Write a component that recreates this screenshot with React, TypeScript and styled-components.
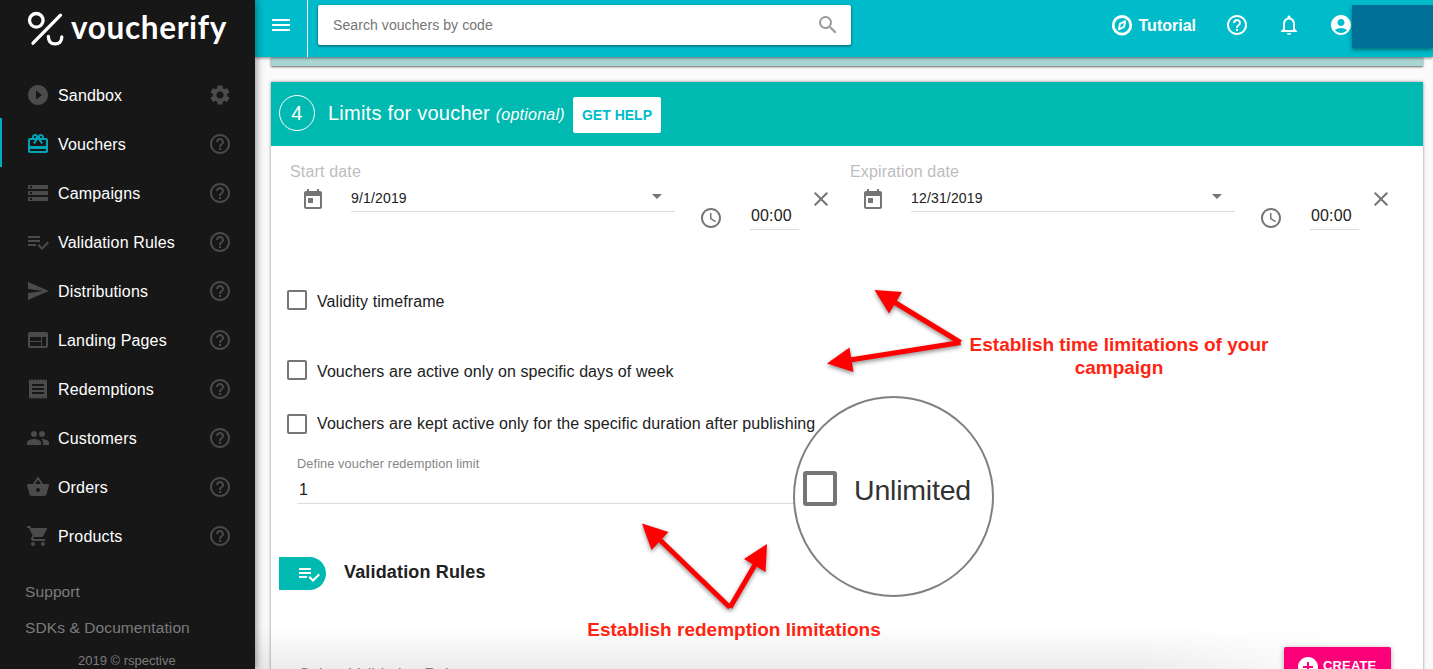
import React from "react"
import styled, {createGlobalStyle} from "styled-components"
import {IconType} from "react-icons"
import {
    MdAccessTime,
    MdAccountCircle,
    MdAddCircle,
    MdClose,
    MdHelpOutline,
    MdMenu,
    MdNotificationsNone,
    MdPeople,
    MdPlayCircleFilled,
    MdReceipt,
    MdRedeem,
    MdSearch,
    MdSend,
    MdSettings,
    MdShoppingBasket,
    MdShoppingCart,
    MdStorage,
    MdToday,
    MdWeb
} from "react-icons/md"

const GlobalStyle = createGlobalStyle`
  * {
    box-sizing: border-box;
  }

  body {
    margin: 0;
    overflow: hidden;
    background: #fafafa;
    font-family: "Liberation Sans", Arial, sans-serif;
    letter-spacing: 0.01em;
  }
`

const Page = styled.div`
  position: relative;
  display: flex;
  width: 1433px;
  height: 669px;
  overflow: hidden;
`

/* ---------- sidebar ---------- */

const Sidebar = styled.aside`
  position: relative;
  z-index: 3;
  flex: 0 0 255px;
  display: flex;
  flex-direction: column;
  background: #171717;
  box-shadow: 1px 0 8px rgba(0, 0, 0, 0.45);
`

const Brand = styled.div`
  flex: none;
  display: flex;
  height: 69px;
  padding: 10px 0 0 26px;
`

const BrandName = styled.span`
  margin: -1px 0 0 5px;
  font-family: Lato, sans-serif;
  font-size: 31.5px;
  font-weight: 700;
  line-height: 36px;
  letter-spacing: 0.65px;
  color: #fff;
`

const NavRow = styled.a<{ $active?: boolean }>`
  flex: none;
  display: flex;
  align-items: center;
  height: 49px;
  padding: 3px 23px 0 24px;
  border-left: 2px solid ${props => props.$active ? "#00acbf" : "transparent"};
  color: #fff;
  font-size: 16px;

  svg {
    flex: none;
    color: #4b4b4b;
  }

  svg:first-child {
    color: ${props => props.$active ? "#00a5b8" : "#4b4b4b"};
  }
`

const NavLabel = styled.span`
  flex: 1;
  padding: 1px 0 0 8px;
  white-space: nowrap;
`

const SideLinks = styled.div`
  flex: none;
  display: flex;
  flex-direction: column;
  padding: 15px 0 0 25px;
  color: #7c7c7c;
  font-size: 15.5px;
  line-height: 36px;
  letter-spacing: 0.1px;
`

const Copyright = styled.div`
  flex: none;
  padding-left: 78px;
  color: #7c7c7c;
  font-size: 13px;
  line-height: 30px;
  letter-spacing: 0;
`

/* ---------- top bar ---------- */

const Main = styled.div`
  position: relative;
  flex: 1;
  display: flex;
  flex-direction: column;
  min-width: 0;
`

const TopBar = styled.header`
  position: relative;
  z-index: 2;
  flex: 0 0 57px;
  display: flex;
  background: #00bbca;
  color: #fff;
  box-shadow: 0 1px 3px rgba(0, 0, 0, 0.5);
`

const MenuButton = styled.div`
  width: 53px;
  padding: 13px 0 0 14px;
  border-right: 1px solid #fff;
`

const SearchBox = styled.div`
  display: flex;
  align-items: center;
  justify-content: space-between;
  width: 533px;
  height: 40px;
  margin: 5px 0 0 10px;
  padding: 0 11px 0 15px;
  border-radius: 2px;
  background: #fff;
  color: #757575;
  font-size: 14px;
  letter-spacing: 0.08px;
  box-shadow: 0 1px 3px rgba(0, 0, 0, 0.55);

  svg {
    color: #999;
  }
`

const TopActions = styled.div`
  flex: 1;
  display: flex;
  justify-content: flex-end;
  padding-top: 13px;

  svg {
    flex: none;
  }
`

const Tutorial = styled.div`
  display: flex;
  align-items: center;
  gap: 5px;
  height: 24px;
  margin-right: 29px;
  font-size: 16px;
  font-weight: 700;
  letter-spacing: 0;
`

const TutorialText = styled.span`
  padding-top: 2px;
`

const TopIcon = styled.div<{ $gap: number }>`
  height: 24px;
  margin-right: ${props => props.$gap}px;
`

const AccountBlock = styled.div`
  width: 81px;
  height: 43px;
  margin: -8px 0 0 -1px;
  background: #006f95;
  box-shadow: 0 2px 4px rgba(0, 0, 0, 0.4);
`

/* ---------- cards ---------- */

const PreviousCard = styled.div`
  flex: none;
  height: 9px;
  margin: 0 10px 16px 16px;
  background: #a9d5d2;
  box-shadow: 0 1px 2px rgba(0, 0, 0, 0.6);
`

const Card = styled.section`
  flex: none;
  display: flex;
  flex-direction: column;
  margin: 0 10px 0 16px;
  background: #fff;
  box-shadow: 0 0 3px rgba(0, 0, 0, 0.45);
`

const CardHeader = styled.div`
  display: flex;
  height: 64px;
  padding: 13px 8px;
  background: #00b9b0;
  color: #fff;
`

const StepNumber = styled.div`
  display: flex;
  align-items: center;
  justify-content: center;
  width: 36px;
  height: 36px;
  border: 1px solid #fff;
  border-radius: 50%;
  font-size: 20px;
`

const CardTitle = styled.h2`
  width: 237px;
  margin: 0 8px 0 13px;
  font-size: 20px;
  font-weight: 400;
  line-height: 37px;
  letter-spacing: 0.23px;
  white-space: nowrap;

  em {
    font-size: 16px;
  }
`

const HelpButton = styled.button`
  width: 88px;
  height: 36px;
  margin-top: 2px;
  padding: 0;
  border: 0;
  border-radius: 2px;
  background: #fff;
  color: #00bbca;
  font: 700 14px "Liberation Sans", Arial, sans-serif;
  letter-spacing: 0;
`

const Dates = styled.div`
  display: grid;
  grid-template-columns: 560px 560px;
  height: 141px;
  padding: 15px 0 0 19px;
`

const DateLabel = styled.div`
  height: 22px;
  color: #bdbdbd;
  font-size: 16px;
  line-height: 22px;
`

const DateRow = styled.div`
  display: flex;
  align-items: flex-start;
  padding-left: 11px;
  color: #757575;

  svg {
    flex: none;
  }
`

const CalendarIcon = styled(MdToday)`
  margin-top: 5px;
`

const DateInput = styled.div`
  display: flex;
  justify-content: space-between;
  width: 324px;
  height: 29px;
  margin: 0 24px 0 26px;
  padding: 6px 13px 0 0;
  border-bottom: 1px solid #dcdcdc;
  color: #212121;
  font-size: 14px;
  line-height: 18px;
`

const Caret = styled.span`
  width: 0;
  height: 0;
  margin-top: 5px;
  border: 5px solid transparent;
  border-top-color: #757575;
  border-bottom: 0;
`

const ClockIcon = styled(MdAccessTime)`
  margin-top: 23px;
`

const TimeInput = styled.div`
  width: 49px;
  height: 25px;
  margin: 22px 10px 0 27px;
  padding-left: 1px;
  border-bottom: 1px solid #dcdcdc;
  color: #212121;
  font-size: 16px;
  line-height: 22px;
`

const CloseIcon = styled(MdClose)`
  margin-top: 4px;
`

const CheckRow = styled.label<{ $space: number }>`
  display: flex;
  align-items: center;
  height: 26px;
  margin: 0 0 ${props => props.$space}px 16px;
  color: #212121;
  font-size: 16px;
  letter-spacing: 0.09px;
`

const CheckText = styled.span<{ $drop?: number }>`
  padding-top: ${props => props.$drop ?? 0}px;
`

const Box = styled.span`
  width: 20px;
  height: 20px;
  margin-right: 10px;
  border: 2px solid #757575;
  border-radius: 2px;
`

const LimitField = styled.div`
  width: 510px;
  height: 49px;
  margin-left: 26px;
  border-bottom: 1px solid #dcdcdc;
`

const LimitLabel = styled.div`
  color: #858585;
  font-size: 12.75px;
  line-height: 18px;
  letter-spacing: 0.1px;
`

const LimitValue = styled.div`
  padding: 7px 0 0 2px;
  color: #212121;
  font-size: 16px;
  line-height: 20px;
`

const RulesHeading = styled.div`
  display: flex;
  align-items: center;
  height: 33px;
  margin: 53px 0 0 8px;
  color: #212121;
  font-size: 18px;
  font-weight: 700;
`

const RulesTag = styled.span`
  width: 47px;
  height: 33px;
  margin-right: 18px;
  padding: 5px 0 0 18px;
  border-radius: 0 17px 17px 0;
  background: #00b9b0;
  color: #fff;
`

const RulesText = styled.span`
  margin-top: -3px;
`

const RulesSelect = styled.div`
  margin: 76px 0 0 28px;
  color: #858585;
  font-size: 16px;
  line-height: 18px;
`

/* ---------- things lying over the form ---------- */

const BottomFade = styled.div`
  position: absolute;
  left: 0;
  right: 0;
  bottom: 0;
  height: 42px;
  background: linear-gradient(rgba(0, 0, 0, 0), rgba(0, 0, 0, 0.075));
  mask-image: linear-gradient(to right, #000 75%, transparent 96%);
`

const CreateButton = styled.button`
  position: absolute;
  left: 1029px;
  top: 647px;
  display: flex;
  align-items: center;
  gap: 3px;
  width: 107px;
  height: 36px;
  padding: 1px 0 0 12px;
  border: 0;
  border-radius: 2px;
  background: #fb0079;
  color: #fff;
  font: 700 13px "Liberation Sans", Arial, sans-serif;
  letter-spacing: 0.15px;
  box-shadow: 0 1px 5px rgba(0, 0, 0, 0.35);

  svg {
    margin-top: 3px;
  }
`

const Magnifier = styled.div`
  position: absolute;
  z-index: 4;
  left: 793px;
  top: 396px;
  display: flex;
  align-items: center;
  width: 201px;
  height: 201px;
  padding: 0 0 16px 8px;
  border: 2.5px solid #808080;
  border-radius: 50%;
  background: #fff;
  color: #333;
  font-size: 28.5px;
  letter-spacing: -0.2px;
`

const BigBox = styled.span`
  width: 34px;
  height: 35px;
  margin-right: 17px;
  border: 4px solid #757575;
  border-radius: 3px;
`

const BigText = styled.span`
  padding-top: 4px;
`

const Arrows = styled.svg`
  position: absolute;
  z-index: 5;
  left: 0;
  top: 0;
  filter: drop-shadow(0 2px 2px rgba(0, 0, 0, 0.45));
`

const Note = styled.div<{ $x: number, $y: number, $width: number }>`
  position: absolute;
  z-index: 5;
  left: ${props => props.$x}px;
  top: ${props => props.$y}px;
  width: ${props => props.$width}px;
  color: #ff2412;
  font-size: 19px;
  font-weight: 700;
  line-height: 23px;
  letter-spacing: 0;
  text-align: center;
`

const PlaylistCheck = () => (
    <svg width="24" height="24" viewBox="0 0 24 24" fill="currentColor">
        <path d="M14 10H2v2h12v-2zm0-4H2v2h12V6zM2 16h8v-2H2v2zm19.5-4.5L23 13l-6.99 7-4.51-4.5L13 14l3.01 3 5.49-5.5z"/>
    </svg>
)

const Compass = () => (
    <svg width="24" height="24" viewBox="0 0 24 24" fill="none" stroke="currentColor">
        <circle cx="12" cy="12.3" r="8.8" strokeWidth="2.8"/>
        <path d="M15.2 8.2L9.9 10.9L8.900 16.300L14.100 13.800Z" strokeWidth="1.9" strokeLinejoin="round"/>
    </svg>
)

const PercentMark = () => (
    <svg width="40" height="38" viewBox="0 0 40 38" fill="none" stroke="#fff" strokeWidth="3.3" strokeLinecap="round">
        <circle cx="10.3" cy="10.3" r="6.8"/>
        <path d="M34.500 5.2L7 33.200"/>
        <path d="M22.400 26.500c0 4.700 2.500 7.400 6.700 7.400s6.700-2.700 6.700-6.900"/>
    </svg>
)

interface NavEntry {
    readonly label: string
    readonly icon: IconType | typeof PlaylistCheck
}

const navEntries: NavEntry[] = [
    {label: "Sandbox", icon: MdPlayCircleFilled},
    {label: "Vouchers", icon: MdRedeem},
    {label: "Campaigns", icon: MdStorage},
    {label: "Validation Rules", icon: PlaylistCheck},
    {label: "Distributions", icon: MdSend},
    {label: "Landing Pages", icon: MdWeb},
    {label: "Redemptions", icon: MdReceipt},
    {label: "Customers", icon: MdPeople},
    {label: "Orders", icon: MdShoppingBasket},
    {label: "Products", icon: MdShoppingCart}
]

const NavItem = (props: { entry: NavEntry }) => {
    const {label, icon: Icon} = props.entry
    return (<NavRow $active={label === "Vouchers"}>
        <Icon size={24}/>
        <NavLabel>{label}</NavLabel>
        {label === "Sandbox" ? <MdSettings size={24}/> : <MdHelpOutline size={24}/>}
    </NavRow>)
}

const DateField = (props: { label: string, date: string }) => (
    <div>
        <DateLabel>{props.label}</DateLabel>
        <DateRow>
            <CalendarIcon size={24}/>
            <DateInput>
                {props.date}
                <Caret/>
            </DateInput>
            <ClockIcon size={24}/>
            <TimeInput>00:00</TimeInput>
            <CloseIcon size={24}/>
        </DateRow>
    </div>
)

const App = () => (
    <>
        <GlobalStyle/>
        <Page>
            <Sidebar>
                <Brand>
                    <PercentMark/>
                    <BrandName>voucherify</BrandName>
                </Brand>
                {navEntries.map(entry => <NavItem key={entry.label} entry={entry}/>)}
                <SideLinks>
                    <span>Support</span>
                    <span>SDKs &amp; Documentation</span>
                </SideLinks>
                <Copyright>2019 © rspective</Copyright>
            </Sidebar>
            <Main>
                <TopBar>
                    <MenuButton><MdMenu size={24}/></MenuButton>
                    <SearchBox>
                        Search vouchers by code
                        <MdSearch size={24}/>
                    </SearchBox>
                    <TopActions>
                        <Tutorial><Compass/><TutorialText>Tutorial</TutorialText></Tutorial>
                        <TopIcon $gap={28}><MdHelpOutline size={24}/></TopIcon>
                        <TopIcon $gap={28}><MdNotificationsNone size={24}/></TopIcon>
                        <TopIcon $gap={0}><MdAccountCircle size={24}/></TopIcon>
                        <AccountBlock/>
                    </TopActions>
                </TopBar>
                <PreviousCard/>
                <Card>
                    <CardHeader>
                        <StepNumber>4</StepNumber>
                        <CardTitle>Limits for voucher <em>(optional)</em></CardTitle>
                        <HelpButton>GET HELP</HelpButton>
                    </CardHeader>
                    <Dates>
                        <DateField label="Start date" date="9/1/2019"/>
                        <DateField label="Expiration date" date="12/31/2019"/>
                    </Dates>
                    <CheckRow $space={44}>
                        <Box/>
                        <CheckText $drop={3}>Validity timeframe</CheckText>
                    </CheckRow>
                    <CheckRow $space={28}>
                        <Box/>
                        <CheckText $drop={3}>Vouchers are active only on specific days of week</CheckText>
                    </CheckRow>
                    <CheckRow $space={18}>
                        <Box/>
                        <CheckText>Vouchers are kept active only for the specific duration after publishing</CheckText>
                    </CheckRow>
                    <LimitField>
                        <LimitLabel>Define voucher redemption limit</LimitLabel>
                        <LimitValue>1</LimitValue>
                    </LimitField>
                    <RulesHeading>
                        <RulesTag><PlaylistCheck/></RulesTag>
                        <RulesText>Validation Rules</RulesText>
                    </RulesHeading>
                    <RulesSelect>Select Validation Rules</RulesSelect>
                </Card>
                <BottomFade/>
                <CreateButton><MdAddCircle size={24}/>CREATE</CreateButton>
            </Main>
            <Magnifier><BigBox/><BigText>Unlimited</BigText></Magnifier>
            <Arrows width="1433" height="669" viewBox="0 0 1433 669" fill="#f00" stroke="#f00">
                <path d="M960.500 342.500L894 302M960.500 342.500L850 360M730 607.500L659 539M730 607.500L756 563" fill="none" strokeWidth="5"/>
                <path d="M874.500 290L902 292L889 313.500ZM827 363.500L849.500 347.500L853.500 372ZM642 523.500L668.500 532L651.500 550ZM767 544L744 559L765.500 572Z" stroke="none"/>
            </Arrows>
            <Note $x={950} $y={333} $width={338}>Establish time limitations of your campaign</Note>
            <Note $x={564} $y={618} $width={340}>Establish redemption limitations</Note>
        </Page>
    </>
)

export default App
